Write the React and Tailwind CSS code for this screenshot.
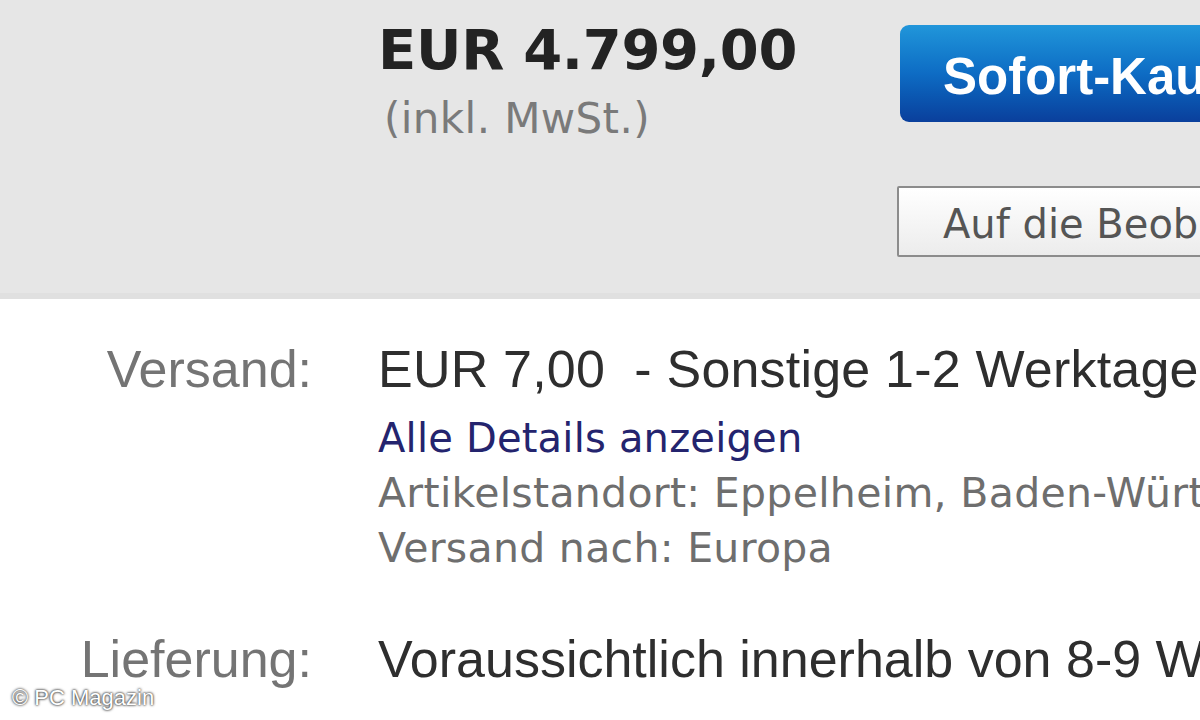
import React from "react";

const verdana = "font-['DejaVu_Sans',Verdana,sans-serif]";
const arial = "font-['Liberation_Sans',Arial,sans-serif]";

function Row({ label, children, className = "" }) {
  return (
    <div className={`flex ${className}`}>
      <div
        className={`w-[312px] shrink-0 text-right text-[52px] leading-[60px] text-[#747474] ${arial}`}
      >
        {label}
      </div>
      <div className="ml-[66px] flex flex-col whitespace-nowrap">{children}</div>
    </div>
  );
}

export default function App() {
  return (
    <div className="relative w-[1200px] h-[720px] overflow-hidden bg-white">
      {/* price panel */}
      <div className="flex h-[299px] bg-[#e6e6e6] border-b-[6px] border-[#e0e0e0]">
        <div className="ml-[378px] w-[522px] shrink-0 pt-[22px]">
          <div
            className={`text-[56px] leading-[56px] font-bold text-[#232323] tracking-[-0.3px] ${verdana}`}
          >
            EUR 4.799,00
          </div>
          <div
            className={`mt-[17px] ml-[6px] text-[42px] leading-[48px] tracking-[0.4px] text-[#7a7a7a] ${verdana}`}
          >
            (inkl. MwSt.)
          </div>
        </div>
        <div className="flex flex-col whitespace-nowrap">
          <button
            className={`mt-[25px] flex h-[97px] w-[360px] items-center rounded-[9px] bg-gradient-to-b from-[#2196da] via-[#0e6cc4] to-[#0a3f9c] pl-[43px] pt-[5px] text-[51px] leading-none font-bold text-white ${arial}`}
          >
            Sofort-Kaufen
          </button>
          <button
            className={`-ml-[3px] mt-[64px] flex h-[71px] w-[400px] items-center rounded-[2px] border-2 border-[#8c8c8c] bg-gradient-to-b from-white to-[#ececec] pl-[44px] pt-[5px] text-[40px] leading-none text-[#555] ${verdana}`}
          >
            Auf die Beobachtungsliste
          </button>
        </div>
      </div>

      {/* shipping details */}
      <div className="pt-[40px]">
        <Row label="Versand:">
          <div className={`text-[52px] leading-[60px] tracking-[0.2px] text-[#2e2e2e] ${arial}`}>
            EUR 7,00&nbsp;&nbsp;- Sonstige 1-2 Werktage
          </div>
          <div className={`mt-[12px] text-[40px] leading-[55px] tracking-[0.2px] ${verdana}`}>
            <a className="text-[#24246e]">Alle Details anzeigen</a>
          </div>
          <div
            className={`text-[41px] leading-[55px] tracking-[0.3px] text-[#6e6e6e] ${verdana}`}
          >
            Artikelstandort: Eppelheim, Baden-Württemberg
          </div>
          <div
            className={`text-[41px] leading-[55px] tracking-[0.3px] text-[#6e6e6e] ${verdana}`}
          >
            Versand nach: Europa
          </div>
        </Row>
        <Row label="Lieferung:" className="mt-[53px]">
          <div className={`text-[52px] leading-[60px] text-[#2e2e2e] ${arial}`}>
            Voraussichtlich innerhalb von 8-9 Werktagen
          </div>
        </Row>
      </div>

      {/* watermark */}
      <div
        className={`absolute left-[12px] bottom-[11px] text-[22px] leading-none text-white [text-shadow:0_0_3px_#333,0_0_2px_#333] ${arial}`}
      >
        © PC Magazin
      </div>
    </div>
  );
}
